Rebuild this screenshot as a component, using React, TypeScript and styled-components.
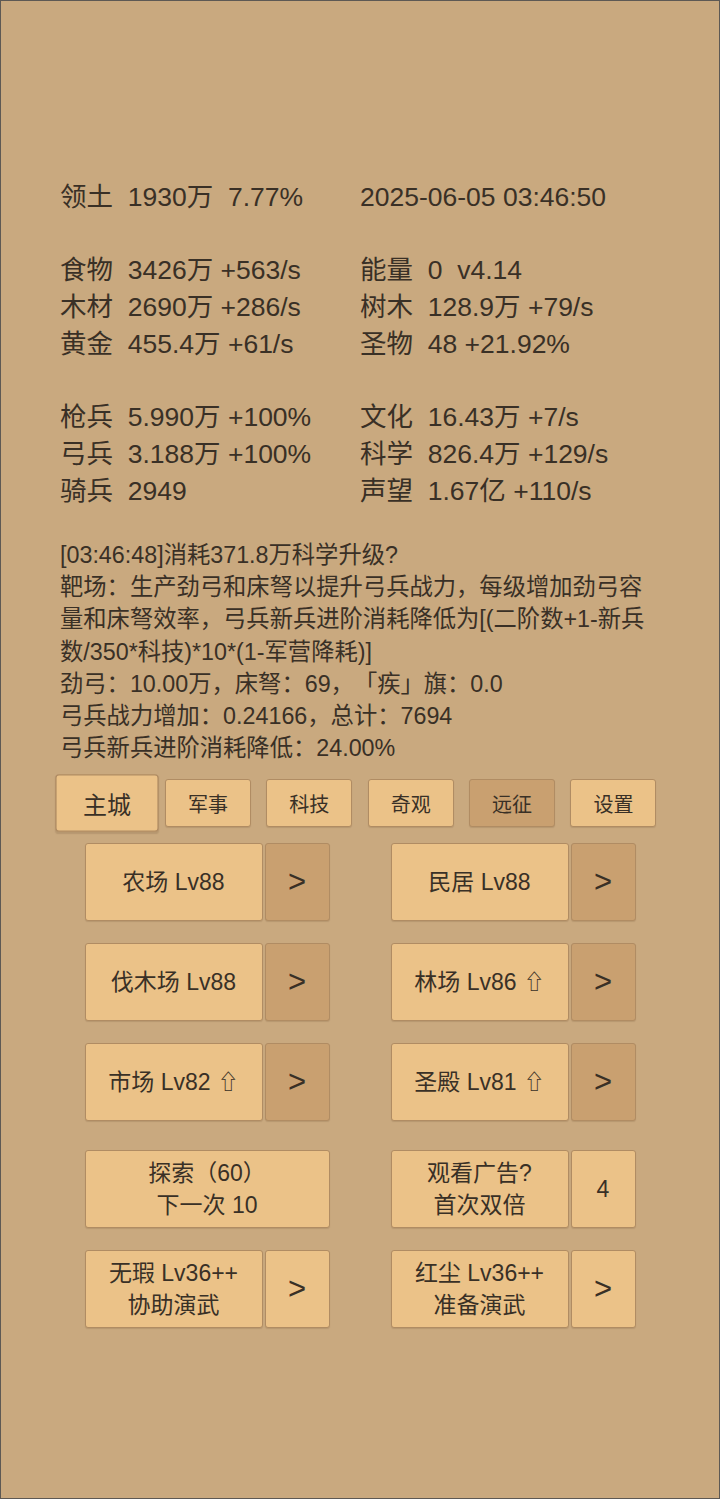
import styled, { createGlobalStyle } from "styled-components";

const GlobalStyle = createGlobalStyle`
  html, body {
    margin: 0;
    padding: 0;
    background: #c9a97f;
  }
  * {
    box-sizing: border-box;
  }
`;

type Stat = { label: string; value: string };

const statGroups: [Stat, Stat][][] = [
  [[{ label: "领土", value: "1930万  7.77%" }, { label: "", value: "2025-06-05 03:46:50" }]],
  [
    [{ label: "食物", value: "3426万 +563/s" }, { label: "能量", value: "0  v4.14" }],
    [{ label: "木材", value: "2690万 +286/s" }, { label: "树木", value: "128.9万 +79/s" }],
    [{ label: "黄金", value: "455.4万 +61/s" }, { label: "圣物", value: "48 +21.92%" }],
  ],
  [
    [{ label: "枪兵", value: "5.990万 +100%" }, { label: "文化", value: "16.43万 +7/s" }],
    [{ label: "弓兵", value: "3.188万 +100%" }, { label: "科学", value: "826.4万 +129/s" }],
    [{ label: "骑兵", value: "2949" }, { label: "声望", value: "1.67亿 +110/s" }],
  ],
];

const infoLines = [
  "[03:46:48]消耗371.8万科学升级?",
  "靶场：生产劲弓和床弩以提升弓兵战力，每级增加劲弓容量和床弩效率，弓兵新兵进阶消耗降低为[(二阶数+1-新兵数/350*科技)*10*(1-军营降耗)]",
  "劲弓：10.00万，床弩：69，「疾」旗：0.0",
  "弓兵战力增加：0.24166，总计：7694",
  "弓兵新兵进阶消耗降低：24.00%",
];

const tabs = [
  { name: "主城", active: true },
  { name: "军事" },
  { name: "科技" },
  { name: "奇观" },
  { name: "远征", dark: true },
  { name: "设置" },
];

// [name, can upgrade]
const buildings: [string, boolean][][] = [
  [["农场 Lv88", false], ["民居 Lv88", false]],
  [["伐木场 Lv88", false], ["林场 Lv86", true]],
  [["市场 Lv82", true], ["圣殿 Lv81", true]],
];

const App = () => {
  return (
    <>
      <GlobalStyle />
      <Page>
        <Stats>
          {statGroups.map((group, gi) => (
            <StatGroup key={gi}>
              {group.map((row, ri) => (
                <StatRow key={ri}>
                  {row.map((stat, ci) => (
                    <Cell key={ci}>
                      {stat.label ? `${stat.label}  ` : ""}
                      {stat.value}
                    </Cell>
                  ))}
                </StatRow>
              ))}
            </StatGroup>
          ))}
        </Stats>

        <Info>
          {infoLines.map((line, i) => (
            <div key={i}>{line}</div>
          ))}
        </Info>

        <TabBar>
          {tabs.map((t) => (
            <Tab key={t.name} $active={t.active} $dark={t.dark}>
              {t.name}
            </Tab>
          ))}
        </TabBar>

        <Grid>
          {buildings.map((row, i) => (
            <GridRow key={i}>
              {row.map(([name, up]) => (
                <Group key={name}>
                  <MainBtn>
                    {name}
                    {up && <Up>⇧</Up>}
                  </MainBtn>
                  <ArrowBtn $dark>&gt;</ArrowBtn>
                </Group>
              ))}
            </GridRow>
          ))}

          <GridRow $spaced>
            <Group>
              <WideBtn>
                探索（60）
                <br />
                下一次 10
              </WideBtn>
            </Group>
            <Group>
              <MainBtn>
                观看广告?
                <br />
                首次双倍
              </MainBtn>
              <CountBtn>4</CountBtn>
            </Group>
          </GridRow>

          <GridRow>
            <Group>
              <MainBtn>
                无瑕 Lv36++
                <br />
                协助演武
              </MainBtn>
              <ArrowBtn>&gt;</ArrowBtn>
            </Group>
            <Group>
              <MainBtn>
                红尘 Lv36++
                <br />
                准备演武
              </MainBtn>
              <ArrowBtn>&gt;</ArrowBtn>
            </Group>
          </GridRow>
        </Grid>
      </Page>
    </>
  );
};

const Page = styled.div`
  width: 720px;
  min-height: 1499px;
  border: 1px solid #5d5954;
  background: #c9a97f;
  color: #393026;
  font-family: "Liberation Sans", "Noto Sans CJK SC", "DejaVu Sans", sans-serif;
  text-spacing-trim: space-all;
  padding-top: 178px;
`;

const Stats = styled.div`
  margin-left: 59px;
  display: flex;
  flex-direction: column;
  gap: 36px;
`;

const StatGroup = styled.div`
  display: flex;
  flex-direction: column;
`;

const StatRow = styled.div`
  display: grid;
  grid-template-columns: 300px 300px;
  font-size: 26.5px;
  line-height: 37px;
`;

const Cell = styled.div`
  white-space: pre;
`;

const Info = styled.div`
  margin: 29px 0 0 59px;
  width: 600px;
  font-size: 23.3px;
  line-height: 32.2px;
`;

const Tab = styled.div<{ $active?: boolean; $dark?: boolean }>`
  width: 86px;
  height: 48px;
  display: flex;
  align-items: center;
  justify-content: center;
  font-size: 20px;
  background: ${(p) => (p.$dark ? "#c9a070" : "#ebc288")};
  border: 1px solid #b08c63;
  border-radius: 3px;
  box-shadow: 0 1px 1px rgba(80, 55, 30, 0.15);
  transform: ${(p) => (p.$active ? "scale(1.2)" : "none")};
`;

const TabBar = styled.div`
  display: flex;
  justify-content: center;
  gap: 15.4px;
  margin-top: 15px;
`;

const Grid = styled.div`
  margin-top: 16px;
  display: flex;
  flex-direction: column;
  gap: 22px;
`;

const GridRow = styled.div<{ $spaced?: boolean }>`
  display: flex;
  justify-content: center;
  gap: 61px;
  margin-top: ${(p) => (p.$spaced ? "7px" : "0")};
`;

const Group = styled.div`
  display: flex;
  gap: 2px;
  width: 245px;
  height: 78px;
`;

const Btn = styled.div<{ $dark?: boolean }>`
  display: flex;
  align-items: center;
  justify-content: center;
  text-align: center;
  font-size: 23px;
  line-height: 32px;
  background: ${(p) => (p.$dark ? "#c9a070" : "#ebc288")};
  border: 1px solid #b08c63;
  border-radius: 3px;
  box-shadow: 0 1px 1px rgba(80, 55, 30, 0.15);
`;

const MainBtn = styled(Btn)`
  width: 178px;
`;

const WideBtn = styled(Btn)`
  width: 245px;
`;

const ArrowBtn = styled(Btn)`
  width: 65px;
  font-size: 31px;
`;

const CountBtn = styled(Btn)`
  width: 65px;
`;

const Up = styled.span`
  margin-left: 7px;
  font-size: 21px;
`;

export default App;
